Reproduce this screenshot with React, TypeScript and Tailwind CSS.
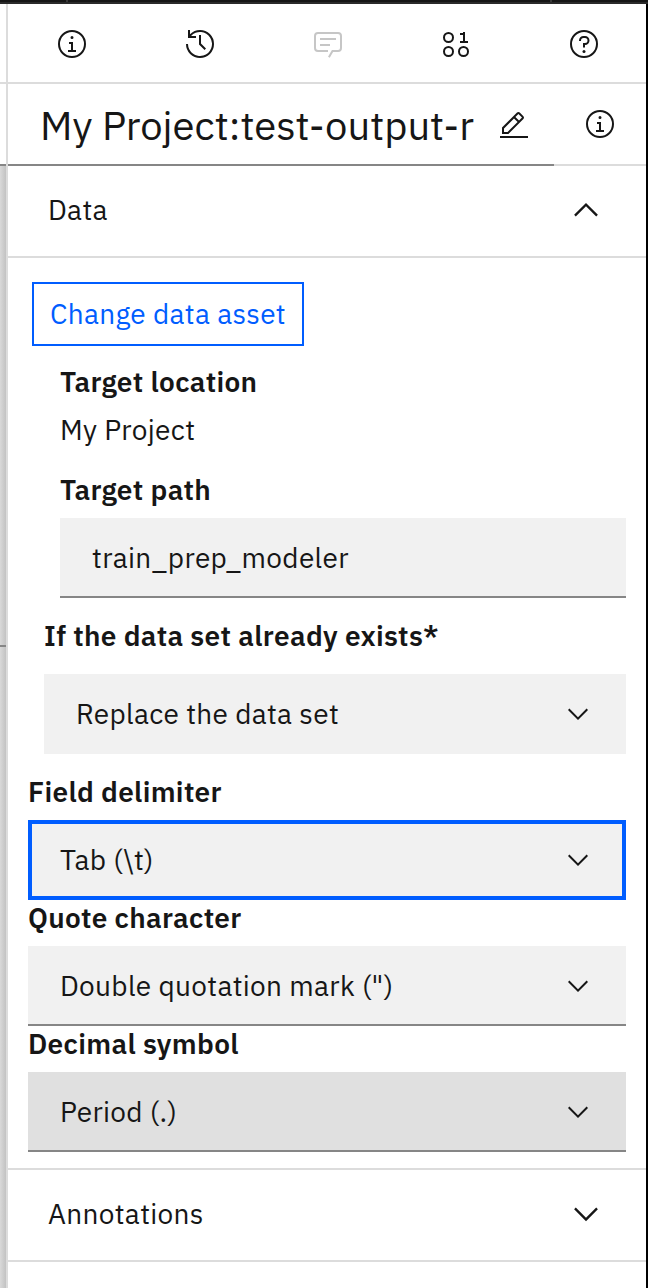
import type { ReactNode } from "react";

function Icon({ children, size = "size-8" }: { children: ReactNode; size?: string }) {
  return (
    <svg viewBox="0 0 32 32" fill="currentColor" className={`${size} shrink-0`} aria-hidden="true">
      {children}
    </svg>
  );
}

const InfoIcon = () => (
  <Icon>
    <path d="M17 22V14H13v2h2v6H12v2h8V22zM16 8a1.5 1.5 0 1 0 1.5 1.5A1.5 1.5 0 0 0 16 8z" />
    <path d="M16 30A14 14 0 1 1 30 16 14 14 0 0 1 16 30Zm0-26A12 12 0 1 0 28 16 12 12 0 0 0 16 4Z" />
  </Icon>
);

const HistoryIcon = () => (
  <Icon>
    <path d="M20.59 22 15 16.41V7h2v8.58l5 5.01L20.59 22z" />
    <path d="M16 2A13.94 13.94 0 0 0 6 6.23V2H4v8h8V8H7.08A12 12 0 1 1 4 16H2A14 14 0 1 0 16 2Z" />
  </Icon>
);

const CommentIcon = () => (
  <Icon>
    <g fill="none" stroke="currentColor" strokeWidth="2">
      <path d="M16 23H6a3 3 0 0 1-3-3V8a3 3 0 0 1 3-3h20a3 3 0 0 1 3 3v12a3 3 0 0 1-3 3h-5.500l-3.600 6.300" />
      <path d="M8 11h16M8 17h10" />
    </g>
  </Icon>
);

const DataIcon = () => (
  <Icon>
    <g fill="none" stroke="currentColor" strokeWidth="2">
      <circle cx="8.500" cy="9.500" r="4.500" />
      <circle cx="8.500" cy="23.500" r="4.500" />
      <circle cx="23.500" cy="23.500" r="4.500" />
    </g>
    <path d="M25 13V4h-2v1h-3v2h3v6h-3v2h8v-2z" />
  </Icon>
);

const HelpIcon = () => (
  <Icon>
    <path d="M16 2a14 14 0 1 0 14 14A14 14 0 0 0 16 2Zm0 26a12 12 0 1 1 12-12 12 12 0 0 1-12 12Z" />
    <circle cx="16" cy="23.500" r="1.500" />
    <path d="M17 8h-1.500a4.490 4.490 0 0 0-4.500 4.500v.5h2v-.5a2.500 2.500 0 0 1 2.500-2.500H17a2.500 2.500 0 0 1 0 5h-2v4.500h2V17a4.500 4.500 0 0 0 0-9Z" />
  </Icon>
);

const EditIcon = () => (
  <Icon>
    <path d="M2 26h28v2H2zM25.400 9c.8-.8.8-2 0-2.800l-3.600-3.600c-.8-.8-2-.8-2.800 0l-15 15V24h6.400l15-15zm-5-5L24 7.600l-3 3L17.400 7l3-3zM6 22v-3.600l10-10 3.600 3.600-10 10H6z" />
  </Icon>
);

const Chevron = ({ up = false, size = "size-8" }: { up?: boolean; size?: string }) => (
  <Icon size={size}>
    {up ? (
      <path d="M16 10 26 20l-1.400 1.400L16 12.800l-8.600 8.600L6 20z" />
    ) : (
      <path d="M16 22 6 12l1.400-1.400 8.600 8.600 8.600-8.600L26 12z" />
    )}
  </Icon>
);

function SectionHeader({ title, up }: { title: string; up?: boolean }) {
  return (
    <button className="flex h-[92px] w-full shrink-0 items-center justify-between border-b-2 border-[#dcdcdc] pr-[41px] pb-0.5 pl-10 text-left tracking-[0.32px]">
      <span>{title}</span>
      <Chevron up={up} size="size-[38px]" />
    </button>
  );
}

function Label({ children, className = "" }: { children: string; className?: string }) {
  return (
    <div className={`flex h-9 items-center font-semibold tracking-[0.32px] whitespace-nowrap ${className}`}>
      {children}
    </div>
  );
}

function Select({ value, className }: { value: string; className: string }) {
  return (
    <button className={`flex h-20 w-full items-center justify-between px-8 text-left tracking-[0.32px] ${className}`}>
      <span className="whitespace-nowrap">{value}</span>
      <Chevron />
    </button>
  );
}

export default function App() {
  return (
    <div className="flex h-[1288px] w-[648px] flex-col overflow-hidden bg-white font-['IBM_Plex_Sans',Roboto,sans-serif] text-[28px] leading-9 text-[#161616]">
      <div className="flex h-1 shrink-0 border-b-2 border-[#2a2a2a] bg-[#161616]">
        <div className="ml-[66px] w-[2px] bg-[#393939]" />
        <div className="ml-[482px] w-[2px] bg-[#393939]" />
      </div>
      <div className="flex min-h-0 grow">
        <div className="flex w-[6px] shrink-0 flex-col">
          <div className="h-20 border-b-2 border-[#dcdcdc]" />
          <div className="h-[82px] border-b-2 border-[#868686]" />
          <div className="h-[481px] border-b-2 border-[#868686] bg-linear-to-r from-[#d9d9d9] to-[#c2c2c2]" />
          <div className="grow bg-linear-to-r from-[#d9d9d9] to-[#c2c2c2]" />
        </div>
        <div className="flex w-[642px] flex-col border-r-2 border-l-2 border-r-black border-l-[#dcdcdc]">
          <nav className="flex h-20 shrink-0 items-center justify-between border-b-2 border-[#dcdcdc] pt-0.5 pr-[46px] pl-12">
            <InfoIcon />
            <HistoryIcon />
            <span className="text-[#c6c6c6]"><CommentIcon /></span>
            <DataIcon />
            <HelpIcon />
          </nav>
          <header className="flex h-[82px] shrink-0">
            <div className="flex w-[546px] items-center border-b-2 border-[#868686] pl-8">
              <h1 className="w-[440px] overflow-hidden pt-0.5 text-[40px] leading-[52px] whitespace-nowrap">
                My Project:test-output-r
              </h1>
              <div className="ml-[18px] pt-1"><EditIcon /></div>
            </div>
            <div className="flex grow items-center border-b-2 border-[#dcdcdc] pl-[30px]">
              <InfoIcon />
            </div>
          </header>
          <SectionHeader title="Data" up />
          <section className="h-[912px] shrink-0 border-b-2 border-[#dcdcdc] px-5 pt-6">
            <button className="ml-1 flex h-16 w-[272px] items-center border-2 border-[#005dff] pl-4 tracking-[0.32px] whitespace-nowrap text-[#005dff]">
              Change data asset
            </button>
            <div className="ml-8">
              <Label className="mt-[18px]">Target location</Label>
              <div className="mt-3 h-9 tracking-[0.32px]">My Project</div>
              <Label className="mt-6">Target path</Label>
              <div className="mt-[10px] flex h-20 items-center border-b-2 border-[#868686] bg-[#f1f1f1] pt-0.5 pl-8 tracking-[0.32px]">
                train_prep_modeler
              </div>
            </div>
            <div className="ml-4">
              <Label className="mt-5">If the data set already exists*</Label>
              <Select value="Replace the data set" className="mt-5 bg-[#f1f1f1]" />
            </div>
            <Label className="mt-5">Field delimiter</Label>
            <Select value="Tab (\t)" className="mt-[10px] bg-[#f1f1f1] inset-ring-4 inset-ring-[#005dff]" />
            <Label>Quote character</Label>
            <Select value={'Double quotation mark (")'} className="mt-[10px] border-b-2 border-[#868686] bg-[#f1f1f1] pt-0.5" />
            <Label>Decimal symbol</Label>
            <Select value="Period (.)" className="mt-[10px] border-b-2 border-[#868686] bg-[#e0e0e0] pt-0.5" />
          </section>
          <SectionHeader title="Annotations" />
        </div>
      </div>
    </div>
  );
}
